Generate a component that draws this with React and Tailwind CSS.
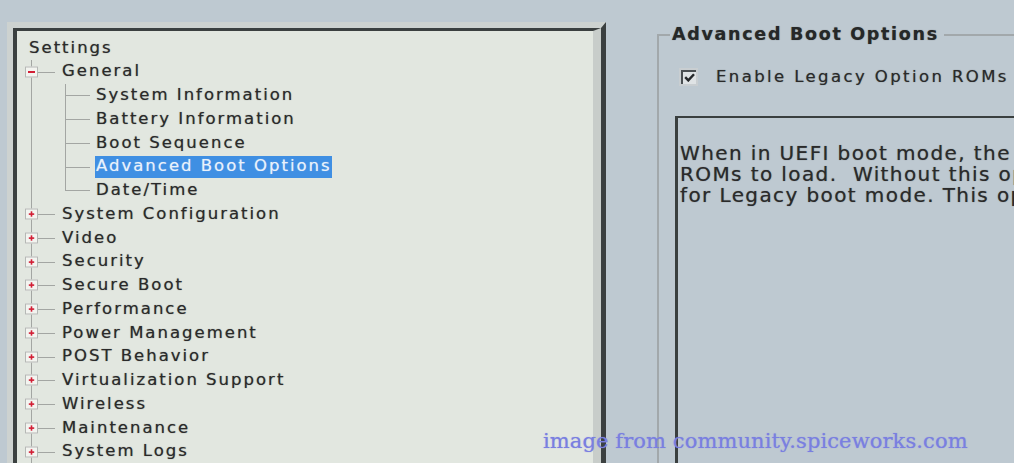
import React from 'react';

const generalChildren = [
  'System Information',
  'Battery Information',
  'Boot Sequence',
  'Advanced Boot Options',
  'Date/Time',
];

const topItems = [
  'System Configuration',
  'Video',
  'Security',
  'Secure Boot',
  'Performance',
  'Power Management',
  'POST Behavior',
  'Virtualization Support',
  'Wireless',
  'Maintenance',
  'System Logs',
];

const line = 'bg-[#a3a6a3]';

function Expander({ open }) {
  return (
    <div className="absolute left-[8px] top-1/2 flex h-[11px] w-[13px] -translate-y-1/2 items-center justify-center border border-[#b5b8b5] bg-[#f3f4f0]">
      <svg width="9" height="7" viewBox="0 0 9 7">
        {open ? (
          <rect x="1" y="2.5" width="7" height="2" fill="#d21f35" />
        ) : (
          <>
            <rect x="1.8" y="2.8" width="5.4" height="1.6" fill="#d21f35" />
            <rect x="3.7" y="0.8" width="1.6" height="5.4" fill="#d21f35" />
          </>
        )}
      </svg>
    </div>
  );
}

function TopRow({ label, open }) {
  return (
    <div className="relative flex h-[23.75px] items-center pl-[45px]">
      <div className={`absolute left-[14px] top-0 bottom-0 w-px ${line}`} />
      <div className={`absolute left-[21px] top-1/2 h-px w-[17px] ${line}`} />
      <Expander open={open} />
      <span>{label}</span>
    </div>
  );
}

function ChildRow({ label, last, selected }) {
  return (
    <div className="relative flex h-[23.75px] items-center pl-[78px]">
      <div className={`absolute left-[14px] top-0 bottom-0 w-px ${line}`} />
      <div className={`absolute left-[48px] top-0 w-px ${line} ${last ? 'h-1/2' : 'h-full'}`} />
      <div className={`absolute left-[48px] top-1/2 h-px w-[25px] ${line}`} />
      {selected ? (
        <span className="flex h-[22px] items-center bg-[#3f8fe3] pl-[1px] text-[#e9f1fb] [text-shadow:0_0_1px_rgba(230,240,250,0.6)]">
          {label}
        </span>
      ) : (
        <span className="pl-[1px]">{label}</span>
      )}
    </div>
  );
}

export default function App() {
  return (
    <div className="relative flex h-[463px] w-[1014px] overflow-hidden bg-[#bec9d1] font-['DejaVu_Sans',sans-serif] text-[#2a2a2a] [text-shadow:0_0_1px_rgba(30,30,30,0.55)]">
      {/* left tree panel */}
      <div className="ml-[7px] mt-[22px] flex w-[599px] shrink-0 border-t-[6px] border-l-[6px] border-r-[5px] border-t-[#cdd2d0] border-l-[#cdd2d0] border-r-[#3b4040]">
        <div className="flex-1 border-t-[3px] border-l-[4px] border-r-[8px] border-t-[#3b4040] border-l-[#3b4040] border-r-[#c8cdca] bg-[#e2e7e0] pt-[5px] text-[16.5px] tracking-[2px]">
          <div className="flex h-[23.75px] items-center pl-[12px]">Settings</div>
          <TopRow label="General" open />
          {generalChildren.map((c, i) => (
            <ChildRow
              key={c}
              label={c}
              last={i === generalChildren.length - 1}
              selected={c === 'Advanced Boot Options'}
            />
          ))}
          {topItems.map((t) => (
            <TopRow key={t} label={t} />
          ))}
        </div>
      </div>

      {/* right group box */}
      <div className="ml-[51px] mt-[22px] flex flex-1 flex-col">
        <div className="flex h-[24px] items-stretch">
          <div className="flex w-[13px] flex-col">
            <div className="h-[12px]" />
            <div className="flex-1 border-t-2 border-l-2 border-[#a2a8ab]" />
          </div>
          <span className="flex items-center whitespace-nowrap pl-[2px] pr-[5px] text-[17.5px] font-bold tracking-[1.7px] text-[#262828]">
            Advanced Boot Options
          </span>
          <div className="flex flex-1 flex-col">
            <div className="h-[12px]" />
            <div className="border-t-2 border-[#a2a8ab]" />
          </div>
        </div>
        <div className="flex flex-1 flex-col border-l-2 border-[#a2a8ab]">
          <div className="ml-[20px] mt-[21px] flex h-[19px] items-center leading-[19px]">
            <div className="flex h-[18px] w-[19px] border-2 border-[#c9ced1]">
              <div className="flex flex-1 items-center justify-center border-t-2 border-l-2 border-[#4a4f52] bg-[#dfe3e5]">
                <svg width="11" height="9" viewBox="0 0 11 9">
                  <path d="M1.2 4.2 L4.3 7.4 L10 1.2" fill="none" stroke="#25282a" strokeWidth="2.4" />
                </svg>
              </div>
            </div>
            <span className="ml-[18px] whitespace-nowrap text-[16.5px] tracking-[2.4px]">Enable Legacy Option ROMs</span>
          </div>
          <div className="ml-[16px] mt-[30px] flex-1 whitespace-pre border-t-2 border-l-[3px] border-[#3a3f3f] pl-[2px] pt-[25px] text-[20px] leading-[21px] tracking-[1.4px]">
            <div>When in UEFI boot mode, the Enable Legacy Option ROMs option will allow legacy option</div>
            <div>ROMs to load.  Without this option, only UEFI option ROMs will load. This option is required</div>
            <div>for Legacy boot mode. This option is not allowed if Secure Boot is enabled.</div>
          </div>
        </div>
      </div>

      {/* watermark */}
      <div className="absolute left-[543px] top-[428px] whitespace-nowrap font-['DejaVu_Serif',serif] text-[21px] leading-[26px] tracking-[0.1px] text-[#7a7fe0] [text-shadow:0_0_1px_rgba(122,127,224,0.7)]">
        image from community.spiceworks.com
      </div>
    </div>
  );
}
